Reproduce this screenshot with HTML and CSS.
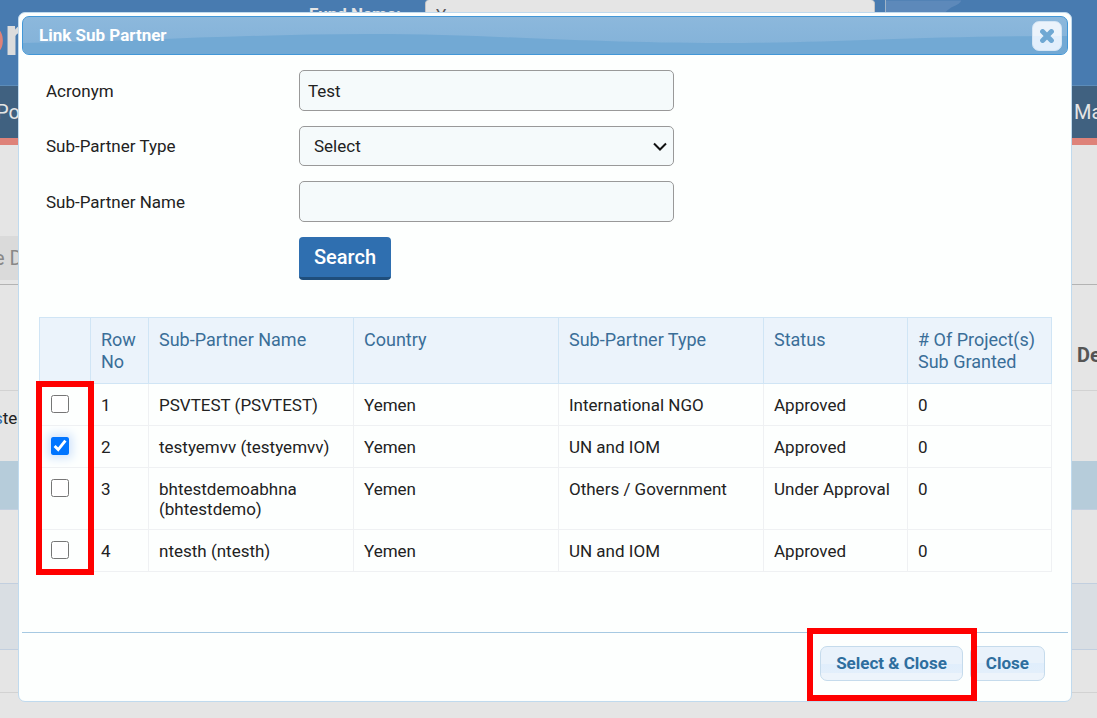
FILE: index.html
```html
<!DOCTYPE html>
<html lang="en">
<head>
<meta charset="utf-8">
<title>Link Sub Partner</title>
<link rel="stylesheet" href="styles.css">
</head>
<body>
<div class="page">
  <header class="banner">
    <div class="logo"><span class="logo-accent">o</span>r</div>
    <label class="fund-label" for="fund">Fund Name:</label>
    <div class="select-wrap fund-wrap">
      <select id="fund" class="fund-select"><option>Y</option></select>
      <svg class="chevron" viewBox="0 0 14 9" aria-hidden="true"><path d="M1 1.5 7 7.5l6-6"/></svg>
    </div>
    <svg class="banner-art" viewBox="0 0 85 85" aria-hidden="true"><path d="M0 0H76Q76 3 66 7 58 12 50 24L30 85H0Z"/></svg>
  </header>
  <nav class="nav"><a href="#" class="nav-first">Po</a><a href="#" class="peek">Ma</a></nav>
  <div class="tabs"><span class="tab">e D</span></div>
  <div class="band band-head"><strong class="peek">De</strong></div>
  <div class="band band-row"><span><a href="#">s</a>ter</span></div>
  <div class="band band-blue"></div>
  <div class="band band-gap"></div>
  <div class="band band-tint"></div>
  <div class="band band-last"></div>
</div>

<section class="dialog" role="dialog" aria-labelledby="dialog-title">
  <header class="titlebar">
    <svg class="wave" viewBox="0 0 1044 37" preserveAspectRatio="none" aria-hidden="true"><path d="M0 26C120 24 230 17 345 17 470 17 550 26 700 26 820 26 880 19 1044 19V37H0Z"/></svg>
    <h1 id="dialog-title" class="title">Link Sub Partner</h1>
    <button type="button" class="x-button" aria-label="Close dialog">
      <svg viewBox="0 0 14 14" aria-hidden="true"><path d="M2.6 2.6l8.8 8.8M11.4 2.6l-8.8 8.8"/></svg>
    </button>
  </header>

  <form class="search-form">
    <label for="acronym">Acronym</label>
    <input id="acronym" class="field" type="text" value="Test">
    <label for="type">Sub-Partner Type</label>
    <div class="select-wrap">
      <select id="type" class="field field-select"><option>Select</option></select>
      <svg class="chevron" viewBox="0 0 14 9" aria-hidden="true"><path d="M1 1.5 7 7.5l6-6"/></svg>
    </div>
    <label for="name">Sub-Partner Name</label>
    <input id="name" class="field" type="text">
    <button type="button" class="search">Search</button>
  </form>

  <div class="results">
    <table>
      <colgroup><col class="c-check"><col class="c-no"><col class="c-wide"><col class="c-wide"><col class="c-wide"><col class="c-mid"><col class="c-mid"></colgroup>
      <thead>
        <tr><th></th><th>Row No</th><th>Sub-Partner Name</th><th>Country</th><th>Sub-Partner Type</th><th>Status</th><th># Of Project(s) Sub Granted</th></tr>
      </thead>
      <tbody>
        <tr><td><input type="checkbox" aria-label="Select row 1"></td><td>1</td><td>PSVTEST (PSVTEST)</td><td>Yemen</td><td>International NGO</td><td>Approved</td><td>0</td></tr>
        <tr><td><input type="checkbox" class="active" aria-label="Select row 2" checked></td><td>2</td><td>testyemvv (testyemvv)</td><td>Yemen</td><td>UN and IOM</td><td>Approved</td><td>0</td></tr>
        <tr><td><input type="checkbox" aria-label="Select row 3"></td><td>3</td><td>bhtestdemoabhna (bhtestdemo)</td><td>Yemen</td><td>Others / Government</td><td>Under Approval</td><td>0</td></tr>
        <tr><td><input type="checkbox" aria-label="Select row 4"></td><td>4</td><td>ntesth (ntesth)</td><td>Yemen</td><td>UN and IOM</td><td>Approved</td><td>0</td></tr>
      </tbody>
    </table>
    <div class="mark mark-checks"></div>
  </div>

  <footer class="actions">
    <div class="marked">
      <button type="button" class="action">Select &amp; Close</button>
      <div class="mark mark-action"></div>
    </div>
    <button type="button" class="action">Close</button>
  </footer>
</section>
</body>
</html>
```

FILE: styles.css
```css
* { box-sizing: border-box; }

body {
  margin: 0;
  font-family: Roboto, "Liberation Sans", sans-serif;
  font-size: 17px;
  color: #222;
  background: #e5e5e5;
}

button, input, select { font: inherit; color: inherit; }
a { color: inherit; text-decoration: none; }

/* Page behind the dialog */
.page { min-height: 100vh; overflow: hidden; }

.banner {
  display: flex;
  align-items: flex-start;
  height: 85px;
  background: #487bb0;
}
.logo {
  width: 336px;
  margin-left: -27px;
  padding-top: 9px;
  font-size: 56px;
  line-height: 54px;
  font-weight: 700;
  color: #dcdcdc;
}
.logo-accent { color: #de8279; }
.fund-label {
  width: 116px;
  padding-top: 4px;
  line-height: 20px;
  font-weight: 700;
  color: #e5e5e5;
}
.fund-wrap { width: 450px; }
.fund-select {
  appearance: none;
  display: block;
  width: 100%;
  height: 30px;
  padding: 0 10px;
  border: 1px solid #c4c4c4;
  border-top: 0;
  border-radius: 4px;
  background: #e5e5e5;
  color: #555;
}
.banner-art {
  width: 85px;
  height: 85px;
  margin-left: 10px;
  border-left: 1px solid #a0b4c8;
  fill: #5d89ba;
}

.nav {
  display: flex;
  justify-content: space-between;
  align-items: center;
  height: 60px;
  border-top: 1px solid #5c8cb9;
  border-bottom: 7px solid #de8279;
  background: #406180;
  color: #e5e5e5;
  font-size: 20px;
}
.nav-first { margin-left: -4px; }
.peek { width: 23px; white-space: nowrap; }

.tabs {
  height: 140px;
  padding-top: 91px;
  border-bottom: 1px solid #b3b3b3;
}
.tab {
  display: block;
  width: 120px;
  margin-left: -6px;
  line-height: 44px;
  background: #dadada;
  color: #888;
  font-size: 20px;
}
.band {
  display: flex;
  align-items: center;
  border-bottom: 1px solid #d2d2d2;
}
.band-head {
  justify-content: flex-end;
  height: 106px;
  padding-top: 34px;
  font-size: 20px;
  color: #555;
}
.band-head .peek { width: 20px; }
.band-row { height: 70px; padding-bottom: 16px; border-bottom: 0; }
.band-row span { margin-left: -6px; }
.band-row a { color: #2f6fb0; }
.band-blue { height: 49px; background: #b6ccda; border-color: #c2cfdf; }
.band-gap { height: 74px; border-color: #c2cfdf; }
.band-tint { height: 66px; background: #d9dee3; border-color: #c2cfdf; }
.band-last { height: 43px; }

/* Dialog */
.dialog {
  position: absolute;
  top: 12px;
  left: 18px;
  right: 25px;
  padding: 3px;
  border: 1px solid #c0daee;
  border-radius: 7px;
  background: #fdfffe;
}
.titlebar {
  position: relative;
  display: flex;
  align-items: center;
  justify-content: space-between;
  height: 39px;
  padding: 0 5px 0 16px;
  border: 1px solid #4297d7;
  border-radius: 7px;
  overflow: hidden;
  background: linear-gradient(#8cb8dc, #82b1d8);
}
.wave {
  position: absolute;
  inset: 0;
  width: 100%;
  height: 100%;
  fill: #72a9d4;
}
.title {
  position: relative;
  margin: 0;
  padding-bottom: 2px;
  font-size: 17px;
  line-height: 22px;
  font-weight: 700;
  color: #fff;
}
.x-button {
  position: relative;
  display: grid;
  place-items: center;
  width: 30px;
  height: 30px;
  padding: 0;
  border: 1px solid #d4e5f4;
  border-radius: 7px;
  background: linear-gradient(#ebf3fb 50%, #e2effc 50%);
}
.x-button svg {
  width: 14px;
  height: 14px;
  stroke: #6fa8d3;
  stroke-width: 5;
  stroke-linecap: round;
}

.search-form {
  display: grid;
  grid-template-columns: 253px 375px;
  row-gap: 15px;
  align-items: center;
  padding: 15px 24px 0;
}
.field {
  display: block;
  width: 100%;
  height: 41px;
  padding: 0 8px;
  border: 1px solid #999;
  border-radius: 5px;
  background: #f5fafb;
}
.field-select { appearance: none; height: 40px; padding: 0 14px; }
.select-wrap { position: relative; }
.chevron {
  position: absolute;
  top: 16px;
  right: 7px;
  width: 14px;
  height: 9px;
  fill: none;
  stroke: #111;
  stroke-width: 2;
  pointer-events: none;
}
.fund-wrap .chevron { top: 11px; right: 14px; stroke: #888; }
.search {
  grid-column: 2;
  justify-self: start;
  height: 43px;
  padding: 0 15px;
  border: 0;
  border-bottom: 3px solid #1f4e7c;
  border-radius: 4px;
  background: #2f6fb0;
  color: #fff;
  font-size: 20px;
  font-weight: 500;
}

.results { position: relative; margin: 37px 18px 60px 17px; }
table { width: 100%; border-collapse: collapse; table-layout: fixed; }
.c-check { width: 51px; }
.c-no { width: 58px; }
.c-wide { width: 205px; }
.c-mid { width: 144px; }
th, td {
  padding: 11px 10px 10px;
  border: 1px solid #eff1f3;
  text-align: left;
  vertical-align: top;
  line-height: 20px;
}
td:first-child { padding-left: 11px; }
th {
  border-color: #d0e5f5;
  background: #ebf3fb;
  color: #3a6e98;
  font-size: 18px;
  font-weight: 400;
  line-height: 22px;
}
td input {
  display: block;
  width: 18px;
  height: 18px;
  margin: 0;
  accent-color: #0075ff;
}
td .active { border-radius: 4px; box-shadow: 0 0 10px 3px #cfe2fb; }

.actions {
  display: flex;
  justify-content: flex-end;
  gap: 7px;
  padding: 13px 23px 17px;
  border-top: 1px solid #a6c9e2;
}
.action {
  display: block;
  height: 35px;
  padding: 0 15px 2px;
  border: 1px solid #c5dbec;
  border-radius: 7px;
  background: linear-gradient(#e9f2fb 50%, #e0eefc 50%, #e3effb 80%, #edf4fb 80%);
  color: #2e6e9e;
  font-weight: 700;
}
.marked { position: relative; }

/* Highlight frames */
.mark { position: absolute; border: 6px solid #f00; pointer-events: none; }
.mark-checks { top: 64px; bottom: -3px; left: -3px; width: 58px; }
.mark-action { inset: -18px -14px -20px -13px; z-index: 1; }
```
